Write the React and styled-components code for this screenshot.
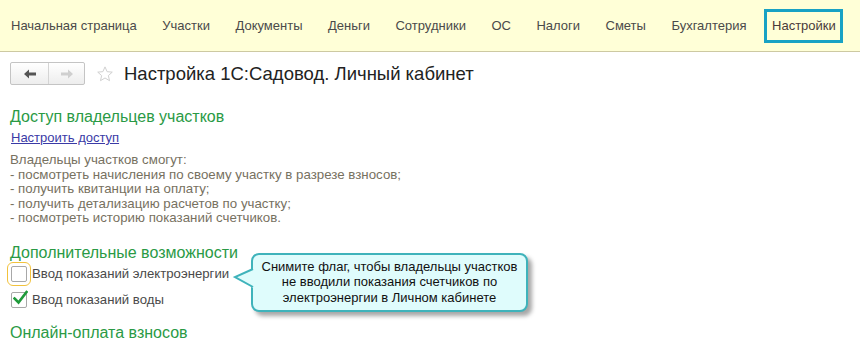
import React from 'react';
import styled, { createGlobalStyle } from 'styled-components';

const GlobalStyle = createGlobalStyle`
  body {
    margin: 0;
    background: #fff;
    font-family: "Liberation Sans", Arial, sans-serif;
  }
`;

const Nav = styled.div`
  height: 52px;
  background: #ffffd7;
  border-bottom: 1px solid #cdc9a2;
  display: flex;
  align-items: center;
  padding: 0 0 0 11px;
  gap: 25.5px;
  box-sizing: border-box;
`;

const NavItem = styled.div`
  font-size: 13px;
  color: #4a4a4a;
  white-space: nowrap;
  ${p => p.active && `
    margin-left: -8px;
    border: 3px solid #18a2c4;
    height: 34px;
    box-sizing: border-box;
    padding: 0 4px 0 5px;
    display: flex;
    align-items: center;
    color: #4a3a3a;
  `}
`;

const Content = styled.div`
  position: relative;
  padding: 10px 10px 0;
`;

const TitleRow = styled.div`
  display: flex;
  align-items: center;
  height: 23px;
`;

const NavButtons = styled.div`
  display: flex;
  border: 1px solid #c4c4c4;
  border-radius: 2px;
  background: linear-gradient(#ffffff, #ededed);
  height: 23px;
  box-sizing: border-box;
`;

const NavButton = styled.div`
  width: ${p => p.w}px;
  display: flex;
  align-items: center;
  justify-content: center;
  & + & {
    border-left: 1px solid #d4d4d4;
  }
`;

const Star = styled.svg`
  margin: 0 10px 0 11px;
`;

const PageTitle = styled.div`
  font-size: 18.5px;
  color: #222;
`;

const Heading = styled.div`
  font-size: 16px;
  line-height: 18px;
  color: #2a9a45;
  margin-top: ${p => p.mt}px;
`;

const Link = styled.a`
  display: block;
  font-size: 13px;
  line-height: 16px;
  color: #3a3aa6;
  text-decoration: underline;
  margin: 4px 0 0 1px;
`;

const Info = styled.div`
  font-size: 13.3px;
  line-height: 14.5px;
  color: #77715f;
  margin-top: 7px;
`;

const CheckRow = styled.div`
  display: flex;
  align-items: center;
  height: 22px;
  margin-top: ${p => p.mt}px;
`;

const Box = styled.div`
  width: 16px;
  height: 16px;
  margin-left: 1px;
  margin-right: 5px;
  border: 1px solid #a8a8a8;
  border-radius: 2px;
  box-sizing: border-box;
  background: #fff;
  position: relative;
  ${p => p.focus && `
    outline: 1px solid #f2c23c;
    outline-offset: 3px;
  `}
`;

const Check = styled.svg`
  position: absolute;
  left: 1px;
  top: -3px;
`;

const CheckLabel = styled.div`
  font-size: 13.2px;
  color: #4a4a4a;
`;

const Tooltip = styled.div`
  position: absolute;
  left: 251px;
  top: 201px;
  width: 277px;
  height: 59px;
  box-sizing: border-box;
  background: #dffcfc;
  border: 2px solid #3fb3bb;
  border-radius: 8px;
  box-shadow: 4px 4px 4px rgba(0, 0, 0, 0.35);
  display: flex;
  align-items: center;
  justify-content: center;
  text-align: center;
  font-size: 13px;
  line-height: 15.5px;
  color: #111;
  padding-bottom: 1px;
`;

const Tail = styled.svg`
  position: absolute;
  left: -19px;
  top: 12px;
  overflow: visible;
`;

const navItems = ['Начальная страница', 'Участки', 'Документы', 'Деньги', 'Сотрудники', 'ОС', 'Налоги', 'Сметы', 'Бухгалтерия'];

const Arrow = ({ color, flip }) => (
  <svg width="12" height="10" viewBox="0 0 12 10" style={flip ? { transform: 'scaleX(-1)' } : undefined}>
    <path d="M0 5 L5 0.5 L5 3.5 L12 3.5 L12 6.5 L5 6.5 L5 9.5 Z" fill={color} />
  </svg>
);

export default function App() {
  return (
    <>
      <GlobalStyle />
      <Nav>
        {navItems.map(item => <NavItem key={item}>{item}</NavItem>)}
        <NavItem active>Настройки</NavItem>
      </Nav>
      <Content>
        <TitleRow>
          <NavButtons>
            <NavButton w={37}><Arrow color="#555" /></NavButton>
            <NavButton w={35}><Arrow color="#cfcfcf" flip /></NavButton>
          </NavButtons>
          <Star width="18" height="18" viewBox="0 0 24 24">
            <path d="M12 2.5 L14.8 8.9 L21.7 9.5 L16.5 14.1 L18 20.9 L12 17.3 L6 20.9 L7.5 14.1 L2.3 9.5 L9.2 8.9 Z"
              fill="none" stroke="#cfcfcf" strokeWidth="1.3" strokeLinejoin="round" />
          </Star>
          <PageTitle>Настройка 1С:Садовод. Личный кабинет</PageTitle>
        </TitleRow>

        <Heading mt={23}>Доступ владельцев участков</Heading>
        <Link href="#">Настроить доступ</Link>
        <Info>
          Владельцы участков смогут:<br />
          - посмотреть начисления по своему участку в разрезе взносов;<br />
          - получить квитанции на оплату;<br />
          - получить детализацию расчетов по участку;<br />
          - посмотреть историю показаний счетчиков.
        </Info>

        <Heading mt={18}>Дополнительные возможности</Heading>
        <CheckRow mt={1}>
          <Box focus />
          <CheckLabel>Ввод показаний электроэнергии</CheckLabel>
        </CheckRow>
        <CheckRow mt={4}>
          <Box>
            <Check width="15" height="16" viewBox="0 0 15 16">
              <path d="M1.5 8.5 L5.5 12.5 L13.5 2" fill="none" stroke="#1f9a3a" strokeWidth="2.6" strokeLinecap="square" />
            </Check>
          </Box>
          <CheckLabel>Ввод показаний воды</CheckLabel>
        </CheckRow>

        <Heading mt={13}>Онлайн-оплата взносов</Heading>

        <Tooltip>
          <Tail width="22" height="24" viewBox="0 0 22 24">
            <polygon points="0,10 19,2 22,2 22,21 19,21" fill="#dffcfc" />
            <polyline points="19,2 1,10 19,20" fill="none" stroke="#3fb3bb" strokeWidth="2" strokeLinejoin="miter" />
          </Tail>
          <div>
            Снимите флаг, чтобы владельцы участков<br />
            не вводили показания счетчиков по<br />
            электроэнергии в Личном кабинете
          </div>
        </Tooltip>
      </Content>
    </>
  );
}
